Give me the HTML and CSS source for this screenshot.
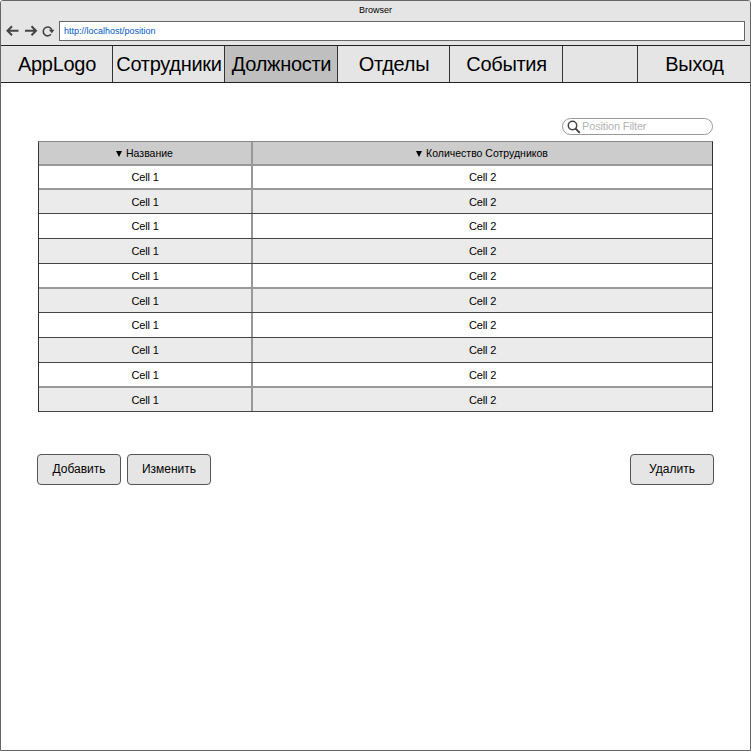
FILE: index.html
```
<!DOCTYPE html>
<html lang="ru"><head><meta charset="utf-8"><title>Browser</title><link rel="stylesheet" href="styles.css"></head>
<body>
<div class="window">
<header class="chrome">
<div class="title">Browser</div>
<div class="toolbar">
<svg class="tools" width="58" height="22" viewBox="0 0 58 22" fill="none" stroke="#444" stroke-width="2"><path d="M17.5 9.7H6.5M11 5.2L6.5 9.7L11 14.2M24 9.7H35M30.5 5.2L35 9.7L30.5 14.2"/><path d="M50 13.3A4.4 4.4 0 1 1 50.8 9" stroke-width="1.6"/><path d="M47.8 8.7h5.6l-2.5 3.6z" fill="#444" stroke="none"/></svg>
<div class="address">http://localhost/position</div>
</div>
</header>
<nav class="nav"><a>AppLogo</a><a>Сотрудники</a><a class="active">Должности</a><a>Отделы</a><a>События</a><span></span><a>Выход</a></nav>
<main>
<div class="search"><svg width="14" height="14" viewBox="0 0 14 14" fill="none" stroke="#444"><circle cx="5.5" cy="5.5" r="4.2" stroke-width="1.5"/><path d="M8.5 8.5L12.8 12.8" stroke-width="1.8"/></svg><span>Position Filter</span></div>
<div class="table">
<div class="row head soft"><div><i></i><span>Название</span></div><div><i></i><span>Количество Сотрудников</span></div></div>
<div class="row short soft"><div>Cell 1</div><div>Cell 2</div></div>
<div class="row short"><div>Cell 1</div><div>Cell 2</div></div>
<div class="row"><div>Cell 1</div><div>Cell 2</div></div>
<div class="row"><div>Cell 1</div><div>Cell 2</div></div>
<div class="row soft"><div>Cell 1</div><div>Cell 2</div></div>
<div class="row short"><div>Cell 1</div><div>Cell 2</div></div>
<div class="row"><div>Cell 1</div><div>Cell 2</div></div>
<div class="row"><div>Cell 1</div><div>Cell 2</div></div>
<div class="row soft"><div>Cell 1</div><div>Cell 2</div></div>
<div class="row short"><div>Cell 1</div><div>Cell 2</div></div>
</div>
<div class="actions"><button>Добавить</button><button>Изменить</button><button class="remove">Удалить</button></div>
</main>
</div>
</body></html>
```
FILE: styles.css
```
*{box-sizing:border-box}
body{margin:0;background:#fff;font-family:"Liberation Sans",Arial,sans-serif;color:#000}
.window{width:751px;height:751px;border:1px solid #666;border-radius:3px 3px 0 0;overflow:hidden}
.chrome{height:44px;background:#e5e5e5}
.title{height:20px;line-height:18px;font-size:9px;text-align:center}
.toolbar{display:flex;height:20px}
.tools{flex:none;width:58px}
.address{width:686px;height:20px;border:1px solid #666;background:#fff;font-size:9px;line-height:18px;padding-left:4px;color:#0057c9}
.nav{display:grid;grid-template-columns:112px 112px 113px 112px 113px 75px 112px;height:38px;background:#e5e5e5;border:solid #222;border-width:1px 0}
.nav>*{border-right:1px solid #333;font-size:20px;line-height:36px;letter-spacing:-.3px;text-align:center;white-space:nowrap;text-indent:1px}
.nav>:last-child{border-right:0}
.nav .active{background:#bfbfbf}
main{padding:35px 36px 0 37px}
.search{display:flex;align-items:center;width:151px;height:17px;margin:0 0 0 524px;border:1px solid #999;border-radius:9px;padding-left:4px;font-size:11px;color:#b3b3b3;letter-spacing:-.15px}
.search span{line-height:13px;margin-top:-1px;margin-left:1px}
.table{width:675px;margin-top:6px;border:1px solid #333;border-top-color:#888;border-bottom:0;font-size:11px;letter-spacing:-.15px}
.row{display:grid;grid-template-columns:214px 1fr;height:25px;border-bottom:1px solid #444}
.row.short{height:24px}
.row.head{background:#ccc;font-size:10.5px;height:24px;letter-spacing:0}
.row.soft{border-bottom:2px solid #999}
.row:nth-child(odd):not(.head){background:#ebebeb}
.row>div{display:flex;align-items:center;justify-content:center}
.row>div:first-child{border-right:2px solid #999}
.row i{border:3.5px solid transparent;border-top:6px solid #000;border-bottom:0;margin:2px 4px 0 -1px}
.actions{display:flex;gap:6px;margin-top:42px;margin-left:-1px}
.actions button{width:84px;height:31px;border:1px solid #555;border-radius:4px;background:#e5e5e5;font:12px "Liberation Sans",Arial,sans-serif;padding:0 0 2px;color:#000}
.actions .remove{margin-left:auto}
```
